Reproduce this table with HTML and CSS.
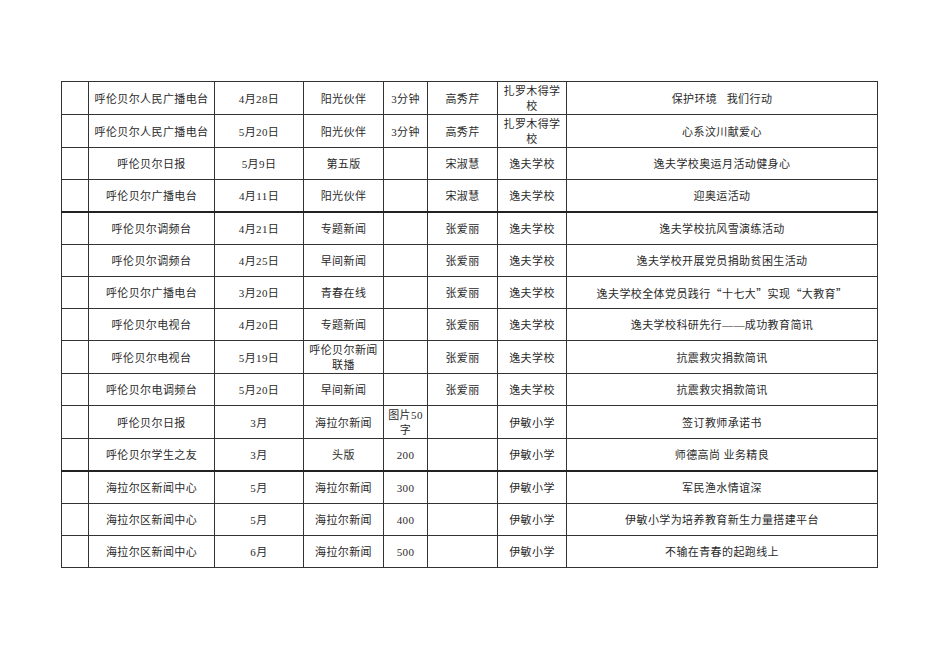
FILE: index.html
```html
<!DOCTYPE html>
<html lang="zh">
<head>
<meta charset="utf-8">
<link rel="stylesheet" href="styles.css">
</head>
<body>
<div class="page">
<table class="report">
<colgroup>
<col class="c0"><col class="c1"><col class="c2"><col class="c3"><col class="c4"><col class="c5"><col class="c6"><col class="c7">
</colgroup>
<tbody>
<tr><td></td><td>呼伦贝尔人民广播电台</td><td>4月28日</td><td>阳光伙伴</td><td>3分钟</td><td>高秀芹</td><td>扎罗木得学校</td><td>保护环境&nbsp;&nbsp;&nbsp;我们行动</td></tr>
<tr><td></td><td>呼伦贝尔人民广播电台</td><td>5月20日</td><td>阳光伙伴</td><td>3分钟</td><td>高秀芹</td><td>扎罗木得学校</td><td>心系汶川献爱心</td></tr>
<tr><td></td><td>呼伦贝尔日报</td><td>5月9日</td><td>第五版</td><td></td><td>宋淑慧</td><td>逸夫学校</td><td>逸夫学校奥运月活动健身心</td></tr>
<tr><td></td><td>呼伦贝尔广播电台</td><td>4月11日</td><td>阳光伙伴</td><td></td><td>宋淑慧</td><td>逸夫学校</td><td>迎奥运活动</td></tr>
<tr class="thick"><td></td><td>呼伦贝尔调频台</td><td>4月21日</td><td>专题新闻</td><td></td><td>张爱丽</td><td>逸夫学校</td><td>逸夫学校抗风雪演练活动</td></tr>
<tr><td></td><td>呼伦贝尔调频台</td><td>4月25日</td><td>早间新闻</td><td></td><td>张爱丽</td><td>逸夫学校</td><td>逸夫学校开展党员捐助贫困生活动</td></tr>
<tr><td></td><td>呼伦贝尔广播电台</td><td>3月20日</td><td>青春在线</td><td></td><td>张爱丽</td><td>逸夫学校</td><td>逸夫学校全体党员践行<span class="cjk">“</span>十七大<span class="cjk">”</span>实现<span class="cjk">“</span>大教育<span class="cjk">”</span></td></tr>
<tr><td></td><td>呼伦贝尔电视台</td><td>4月20日</td><td>专题新闻</td><td></td><td>张爱丽</td><td>逸夫学校</td><td>逸夫学校科研先行——成功教育简讯</td></tr>
<tr><td></td><td>呼伦贝尔电视台</td><td>5月19日</td><td>呼伦贝尔新闻联播</td><td></td><td>张爱丽</td><td>逸夫学校</td><td>抗震救灾捐款简讯</td></tr>
<tr><td></td><td>呼伦贝尔电调频台</td><td>5月20日</td><td>早间新闻</td><td></td><td>张爱丽</td><td>逸夫学校</td><td>抗震救灾捐款简讯</td></tr>
<tr><td></td><td>呼伦贝尔日报</td><td>3月</td><td>海拉尔新闻</td><td>图片50字</td><td></td><td>伊敏小学</td><td>签订教师承诺书</td></tr>
<tr><td></td><td>呼伦贝尔学生之友</td><td>3月</td><td>头版</td><td>200</td><td></td><td>伊敏小学</td><td>师德高尚 业务精良</td></tr>
<tr class="thick"><td></td><td>海拉尔区新闻中心</td><td>5月</td><td>海拉尔新闻</td><td>300</td><td></td><td>伊敏小学</td><td>军民渔水情谊深</td></tr>
<tr><td></td><td>海拉尔区新闻中心</td><td>5月</td><td>海拉尔新闻</td><td>400</td><td></td><td>伊敏小学</td><td>伊敏小学为培养教育新生力量搭建平台</td></tr>
<tr><td></td><td>海拉尔区新闻中心</td><td>6月</td><td>海拉尔新闻</td><td>500</td><td></td><td>伊敏小学</td><td>不输在青春的起跑线上</td></tr>
</tbody>
</table>
</div>
</body>
</html>
```
FILE: styles.css
```css
html, body {
  margin: 0;
  padding: 0;
  background: #ffffff;
}
.page {
  padding: 81px 0 0 61px;
}
.report {
  border-collapse: collapse;
  table-layout: fixed;
  width: 816px;
  font-family: "Liberation Serif", "Noto Sans CJK SC", serif;
  font-size: 11px;
  letter-spacing: 0.4px;
  color: #2a2a2a;
  border: 1px solid #777;
}
.c0 { width: 27px; }
.c1 { width: 126px; }
.c2 { width: 89px; }
.c3 { width: 80px; }
.c4 { width: 44px; }
.c5 { width: 70px; }
.c6 { width: 69px; }
.c7 { width: 311px; }
.report td {
  border: 1px solid #333;
  height: 29px;
  padding: 2px 4px 0;
  text-align: center;
  vertical-align: middle;
  line-height: 15px;
  font-weight: 400;
}
.report tr.thick td {
  border-top: 2px solid #222;
}
.cjk {
  font-family: "Noto Sans CJK SC", sans-serif;
}
```
